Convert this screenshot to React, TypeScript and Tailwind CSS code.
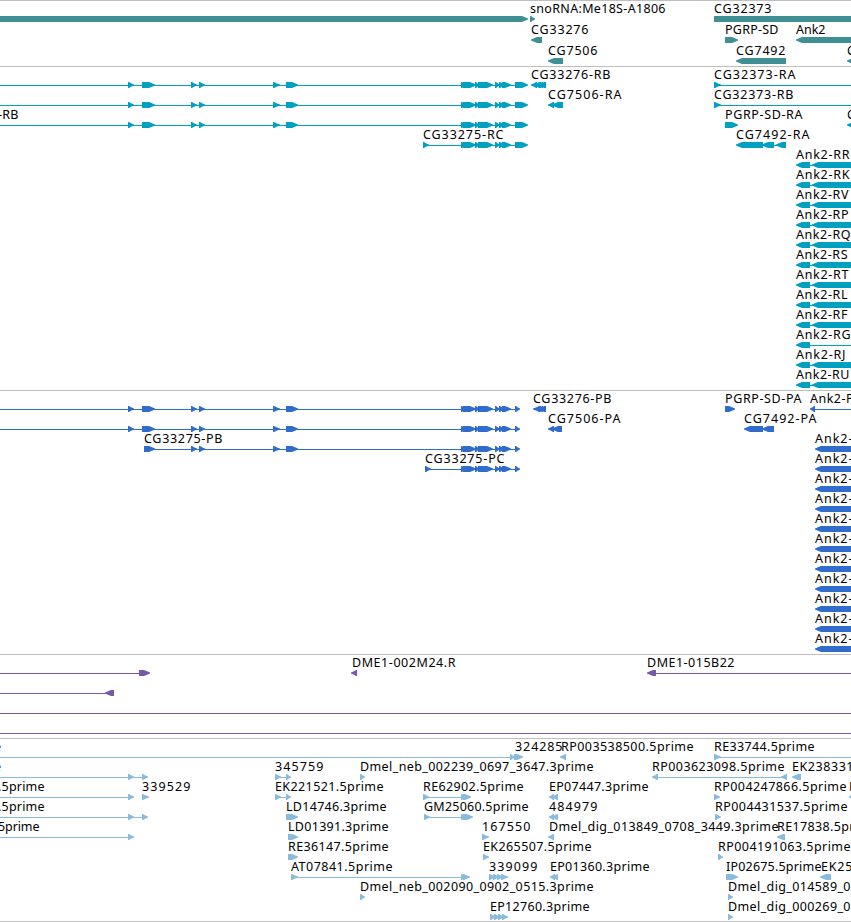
type Dir = "r" | "l";
type Glyph = [from: number, to: number, dir: Dir];
type Label = [x: number, end: number, text: string];

type Row = {
  labels?: Label[];
  lines?: [number, number][];
  glyphs?: Glyph[];
};

type Track = {
  name: string;
  color: string;
  rowHeight: number;
  className: string;
  rows: Row[];
};

const WIDTH = 851;
// features running past the viewport are cut off here
const OFF = 870;

const UPSTREAM: Glyph[] = [
  [128, 134, "r"],
  [142, 155, "r"],
  [191, 197, "r"],
  [199, 205, "r"],
  [273, 280, "r"],
  [286, 298, "r"],
];

const CLUSTER: Glyph[] = [
  [461, 466, "r"],
  [463, 476, "r"],
  [475, 480, "r"],
  [478, 493, "r"],
  [495, 500, "r"],
  [499, 505, "r"],
  [502, 511, "r"],
];

const LAST_EXON: Glyph = [515, 528, "r"];
const LAST_CDS: Glyph = [515, 520, "r"];

const STRIPES: Glyph[] = [
  [536, 541, "l"],
  [538, 543, "l"],
  [540, 545, "l"],
  [542, 546, "l"],
];

const ank2Transcript = (text: string, end: number): Row => ({
  labels: [[796, end, text]],
  lines: [[808, 814]],
  glyphs: [
    [796, 810, "l"],
    [812, OFF, "l"],
  ],
});

const ank2Protein = (): Row => ({
  labels: [[815, 852, "Ank2-"]],
  glyphs: [[815, OFF, "l"]],
});

const TRACKS: Track[] = [
  {
    name: "genes",
    color: "#3f8f94",
    rowHeight: 21,
    className: "h-[66px]",
    rows: [
      {
        labels: [
          [530, 665, "snoRNA:Me18S-A1806"],
          [714, 771, "CG32373"],
        ],
        glyphs: [
          [-20, 528, "r"],
          [530, 535, "r"],
          [714, OFF, "r"],
        ],
      },
      {
        labels: [
          [531, 588, "CG33276"],
          [725, 778, "PGRP-SD"],
          [796, 825, "Ank2"],
        ],
        glyphs: [
          [531, 542, "l"],
          [725, 738, "r"],
          [796, OFF, "l"],
        ],
      },
      {
        labels: [
          [548, 597, "CG7506"],
          [736, 785, "CG7492"],
          [847, 855, "C"],
        ],
        glyphs: [
          [548, 563, "l"],
          [736, 786, "l"],
          [847, OFF, "l"],
        ],
      },
    ],
  },
  {
    name: "transcripts",
    color: "#00a0c0",
    rowHeight: 20,
    className: "h-[324px]",
    rows: [
      {
        labels: [
          [531, 610, "CG33276-RB"],
          [714, 795, "CG32373-RA"],
        ],
        lines: [
          [0, 516],
          [714, OFF],
        ],
        glyphs: [
          ...UPSTREAM,
          ...CLUSTER,
          LAST_EXON,
          [531, 537, "l"],
          [534, 540, "l"],
          ...STRIPES,
          [714, 721, "r"],
        ],
      },
      {
        labels: [
          [548, 621, "CG7506-RA"],
          [714, 793, "CG32373-RB"],
        ],
        lines: [
          [0, 516],
          [714, OFF],
        ],
        glyphs: [
          ...UPSTREAM,
          ...CLUSTER,
          LAST_EXON,
          [548, 554, "l"],
          [552, 563, "l"],
          [714, 721, "r"],
        ],
      },
      {
        labels: [
          [-2, 18, "-RB"],
          [725, 802, "PGRP-SD-RA"],
          [847, 855, "C"],
        ],
        lines: [[0, 516]],
        glyphs: [...UPSTREAM, ...CLUSTER, LAST_EXON, [725, 738, "r"], [847, OFF, "l"]],
      },
      {
        labels: [
          [423, 503, "CG33275-RC"],
          [736, 809, "CG7492-RA"],
        ],
        lines: [
          [423, 516],
          [760, 780],
        ],
        glyphs: [
          [423, 429, "r"],
          ...CLUSTER,
          LAST_EXON,
          [736, 763, "l"],
          [762, 774, "l"],
          [776, 786, "l"],
        ],
      },
      ank2Transcript("Ank2-RR", 849),
      ank2Transcript("Ank2-RK", 849),
      ank2Transcript("Ank2-RV", 848),
      ank2Transcript("Ank2-RP", 848),
      ank2Transcript("Ank2-RQ", 850),
      ank2Transcript("Ank2-RS", 847),
      ank2Transcript("Ank2-RT", 848),
      ank2Transcript("Ank2-RL", 847),
      ank2Transcript("Ank2-RF", 847),
      {
        labels: [[796, 850, "Ank2-RG"]],
        lines: [[808, OFF]],
        glyphs: [[796, 810, "l"]],
      },
      ank2Transcript("Ank2-RJ", 845),
      ank2Transcript("Ank2-RU", 849),
    ],
  },
  {
    name: "proteins",
    color: "#306ccc",
    rowHeight: 20,
    className: "h-[264px]",
    rows: [
      {
        labels: [
          [533, 611, "CG33276-PB"],
          [725, 801, "PGRP-SD-PA"],
          [810, 853, "Ank2-P"],
        ],
        lines: [
          [0, 516],
          [812, OFF],
        ],
        glyphs: [
          ...UPSTREAM,
          ...CLUSTER,
          LAST_CDS,
          [533, 540, "l"],
          ...STRIPES,
          [725, 735, "r"],
          [810, 815, "l"],
        ],
      },
      {
        labels: [
          [548, 620, "CG7506-PA"],
          [744, 816, "CG7492-PA"],
        ],
        lines: [[0, 516]],
        glyphs: [
          ...UPSTREAM,
          ...CLUSTER,
          LAST_CDS,
          [548, 554, "l"],
          [552, 562, "l"],
          [744, 763, "l"],
          [762, 774, "l"],
        ],
      },
      {
        labels: [
          [144, 222, "CG33275-PB"],
          [815, 852, "Ank2-"],
        ],
        lines: [[144, 516]],
        glyphs: [[144, 155, "r"], ...UPSTREAM.slice(2), ...CLUSTER, LAST_CDS, [815, OFF, "l"]],
      },
      {
        labels: [
          [425, 504, "CG33275-PC"],
          [815, 852, "Ank2-"],
        ],
        lines: [[425, 516]],
        glyphs: [[425, 431, "r"], ...CLUSTER, LAST_CDS, [815, OFF, "l"]],
      },
      ...Array.from({ length: 9 }, ank2Protein),
    ],
  },
  {
    name: "bacs",
    color: "#7858a8",
    rowHeight: 20,
    className: "h-[84px]",
    rows: [
      {
        labels: [
          [352, 455, "DME1-002M24.R"],
          [647, 734, "DME1-015B22"],
        ],
        lines: [
          [0, 140],
          [650, OFF],
        ],
        glyphs: [
          [139, 150, "r"],
          [351, 357, "l"],
          [647, 656, "l"],
        ],
      },
      { lines: [[0, 108]], glyphs: [[105, 114, "l"]] },
      { lines: [[0, OFF]] },
      { lines: [[0, OFF]] },
    ],
  },
  {
    name: "ests",
    color: "#88bbdd",
    rowHeight: 20,
    className: "h-[184px]",
    rows: [
      {
        labels: [
          [-6, 1, "e"],
          [515, 562, "324285"],
          [561, 693, "RP003538500.5prime"],
          [714, 814, "RE33744.5prime"],
        ],
        lines: [
          [0, 516],
          [716, OFF],
        ],
        glyphs: [
          [510, 515, "r"],
          [514, 523, "r"],
          [560, 566, "l"],
          [714, 721, "r"],
        ],
      },
      {
        labels: [
          [-6, 1, "e"],
          [275, 323, "345759"],
          [360, 593, "Dmel_neb_002239_0697_3647.3prime"],
          [652, 784, "RP003623098.5prime"],
          [792, 853, "EK238331"],
        ],
        lines: [
          [0, 143],
          [276, 288],
          [654, 785],
        ],
        glyphs: [
          [128, 134, "r"],
          [142, 148, "r"],
          [275, 281, "r"],
          [286, 291, "r"],
          [360, 365, "r"],
          [652, 658, "l"],
          [781, 787, "l"],
          [792, 801, "l"],
        ],
      },
      {
        labels: [
          [-2, 44, ".5prime"],
          [142, 190, "339529"],
          [275, 383, "EK221521.5prime"],
          [423, 523, "RE62902.5prime"],
          [549, 648, "EP07447.3prime"],
          [714, 846, "RP004247866.5prime"],
          [849, 856, "E"],
        ],
        lines: [
          [0, 129],
          [276, 288],
          [425, 465],
        ],
        glyphs: [
          [128, 134, "r"],
          [142, 149, "r"],
          [275, 281, "r"],
          [286, 291, "r"],
          [423, 429, "r"],
          [461, 466, "r"],
          [463, 471, "r"],
          [549, 554, "l"],
          [552, 558, "l"],
          [714, 720, "r"],
          [849, OFF, "l"],
        ],
      },
      {
        labels: [
          [-2, 44, ".5prime"],
          [286, 386, "LD14746.3prime"],
          [424, 528, "GM25060.5prime"],
          [549, 597, "484979"],
          [715, 847, "RP004431537.5prime"],
        ],
        lines: [
          [0, 143],
          [425, 465],
        ],
        glyphs: [
          [128, 134, "r"],
          [142, 148, "r"],
          [286, 298, "r"],
          [424, 430, "r"],
          [461, 466, "r"],
          [463, 473, "r"],
          [549, 554, "l"],
          [552, 558, "l"],
          [715, 721, "r"],
        ],
      },
      {
        labels: [
          [-2, 39, "5prime"],
          [288, 388, "LD01391.3prime"],
          [482, 530, "167550"],
          [549, 778, "Dmel_dig_013849_0708_3449.3prime"],
          [777, 877, "RE17838.5prime"],
        ],
        lines: [[0, 129]],
        glyphs: [
          [128, 134, "r"],
          [288, 298, "r"],
          [482, 489, "r"],
          [548, 554, "l"],
          [777, 785, "l"],
        ],
      },
      {
        labels: [
          [288, 388, "RE36147.5prime"],
          [483, 591, "EK265507.5prime"],
          [718, 850, "RP004191063.5prime"],
        ],
        glyphs: [
          [288, 298, "r"],
          [483, 489, "r"],
          [718, 723, "r"],
        ],
      },
      {
        labels: [
          [291, 392, "AT07841.5prime"],
          [489, 537, "339099"],
          [550, 649, "EP01360.3prime"],
          [726, 821, "IP02675.5prime"],
          [821, 852, "EK25"],
        ],
        lines: [[293, 464]],
        glyphs: [
          [291, 298, "r"],
          [461, 466, "r"],
          [463, 470, "r"],
          [489, 495, "r"],
          [493, 499, "r"],
          [497, 503, "r"],
          [501, 508, "r"],
          [550, 555, "l"],
          [553, 558, "l"],
          [726, 738, "r"],
          [820, 831, "l"],
        ],
      },
      {
        labels: [
          [360, 593, "Dmel_neb_002090_0902_0515.3prime"],
          [728, 850, "Dmel_dig_014589_0"],
        ],
        glyphs: [
          [360, 365, "r"],
          [728, 733, "r"],
        ],
      },
      {
        labels: [
          [490, 589, "EP12760.3prime"],
          [728, 850, "Dmel_dig_000269_0"],
        ],
        glyphs: [
          [490, 496, "r"],
          [494, 500, "r"],
          [498, 504, "r"],
          [502, 508, "r"],
          [728, 733, "r"],
        ],
      },
    ],
  },
];

const GLYPH_TOP = 15;

function glyphPoints([from, to, dir]: Glyph) {
  const head = Math.min(to - from, 7);
  const top = GLYPH_TOP;
  const mid = top + 3;
  const bottom = top + 6;
  // wide features get a rounder head than the small ones
  const bulge = to - from > 7 ? 0.6 : 0.25;

  const tip = dir === "r" ? to : from;
  const tail = dir === "r" ? from : to;
  const sign = dir === "r" ? 1 : -1;
  const neck = tip - sign * (head - 1);
  const cheek = tip - sign * head * 0.5;

  return [
    [tail, top],
    [neck, top],
    [cheek, top + 1.5 - bulge],
    [tip, mid - 0.5],
    [tip, mid + 0.5],
    [cheek, bottom - 1.5 + bulge],
    [neck, bottom],
    [tail, bottom],
  ]
    .map((p) => p.join(","))
    .join(" ");
}

function FeatureRow({ row, color, height }: { row: Row; color: string; height: number }) {
  return (
    <svg width={WIDTH} height={height} className="block shrink-0 overflow-visible">
      {row.lines?.map(([from, to], i) => (
        <rect key={i} x={from} y={GLYPH_TOP + 3} width={to - from} height={1} fill={color} />
      ))}
      {row.glyphs?.map((g, i) => (
        <polygon key={i} points={glyphPoints(g)} fill={color} />
      ))}
      {row.labels?.map(([x, end, text], i) => (
        <text
          key={i}
          x={x}
          y={12}
          textLength={end - x + 0.5}
          className="fill-black font-['Noto_Sans','DejaVu_Sans',sans-serif] text-[12.5px]"
        >
          {text}
        </text>
      ))}
    </svg>
  );
}

export default function App() {
  return (
    <main className="flex h-[922px] w-[851px] flex-col overflow-hidden bg-white">
      {TRACKS.map((track) => (
        <section
          key={track.name}
          className={`flex shrink-0 flex-col border-t border-[#bebebe] ${track.className} ${
            track.name === "ests" ? "border-b" : ""
          }`}
        >
          {track.rows.map((row, i) => (
            <FeatureRow key={i} row={row} color={track.color} height={track.rowHeight} />
          ))}
        </section>
      ))}
    </main>
  );
}
